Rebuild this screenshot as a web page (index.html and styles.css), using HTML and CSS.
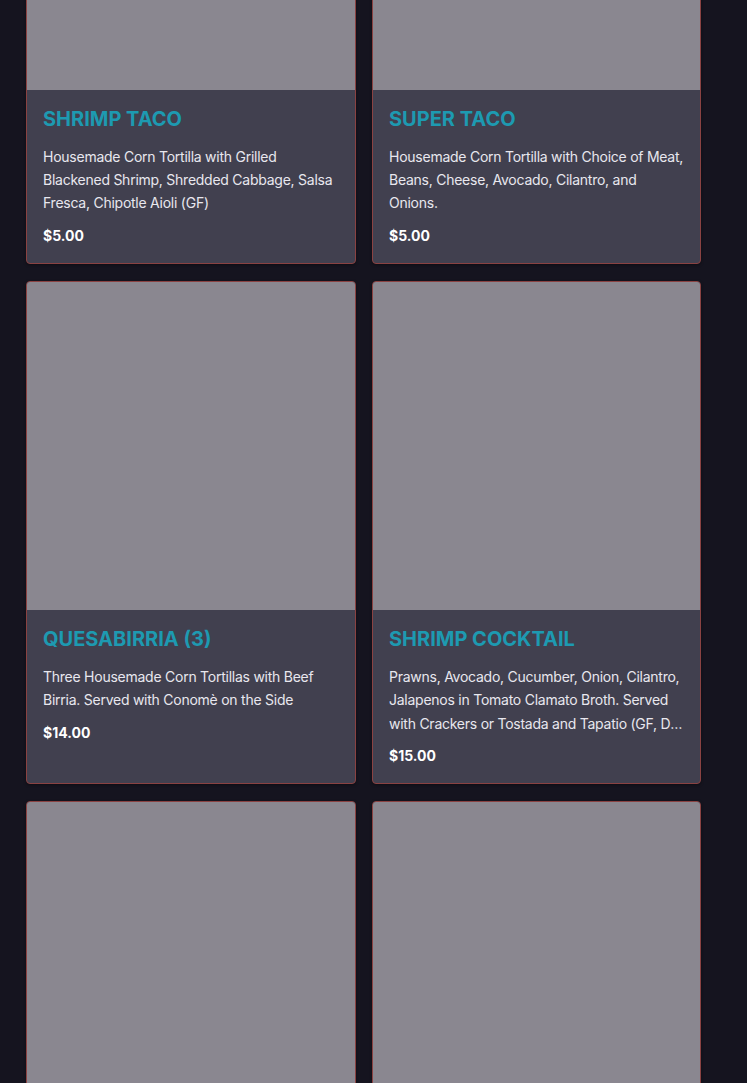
FILE: index.html
```html
<!DOCTYPE html>
<html>
<head>
<meta charset="utf-8">
<link rel="stylesheet" href="styles.css">
</head>
<body>
<div class="grid">
  <div class="card">
    <div class="img"></div>
    <div class="body">
      <h3 class="title">SHRIMP TACO</h3>
      <p class="desc">Housemade Corn Tortilla with Grilled Blackened Shrimp, Shredded Cabbage, Salsa Fresca, Chipotle Aioli (GF)</p>
      <p class="price">$5.00</p>
    </div>
  </div>
  <div class="card">
    <div class="img"></div>
    <div class="body">
      <h3 class="title">SUPER TACO</h3>
      <p class="desc">Housemade Corn Tortilla with Choice of Meat, Beans, Cheese, Avocado, Cilantro, and Onions.</p>
      <p class="price">$5.00</p>
    </div>
  </div>
  <div class="card">
    <div class="img"></div>
    <div class="body">
      <h3 class="title">QUESABIRRIA (3)</h3>
      <p class="desc">Three Housemade Corn Tortillas with Beef Birria. Served with Conomè on the Side</p>
      <p class="price">$14.00</p>
    </div>
  </div>
  <div class="card">
    <div class="img"></div>
    <div class="body">
      <h3 class="title">SHRIMP COCKTAIL</h3>
      <p class="desc">Prawns, Avocado, Cucumber, Onion, Cilantro, Jalapenos in Tomato Clamato Broth. Served with Crackers or Tostada and Tapatio (GF, DF upon request)</p>
      <p class="price">$15.00</p>
    </div>
  </div>
  <div class="card">
    <div class="img"></div>
  </div>
  <div class="card">
    <div class="img"></div>
  </div>
</div>
</body>
</html>
```

FILE: styles.css
```css
html, body {
  margin: 0;
  padding: 0;
  background: #15141f;
  overflow: hidden;
}
body {
  font-family: Inter, "Liberation Sans", sans-serif;
  height: 1083px;
}
.grid {
  display: grid;
  grid-template-columns: 330px 329px;
  column-gap: 16px;
  row-gap: 17px;
  padding-left: 26px;
  margin-top: -239px;
}
.card {
  display: flex;
  flex-direction: column;
  border: 1px solid #8a4242;
  border-radius: 4px;
  overflow: hidden;
  background: #41404f;
  box-shadow: 0 1px 3px rgba(0,0,0,0.4);
}
.img {
  height: 328px;
  background: #8a8790;
}
.body {
  flex: 1;
  padding: 15px 15px 17px 16px;
}
.title {
  margin: 0;
  font-size: 20px;
  line-height: 28px;
  font-weight: 700;
  color: #1d9ab1;
}
.desc {
  margin: 12px 0 0;
  font-size: 14px;
  line-height: 23.2px;
  letter-spacing: -0.25px;
  color: #e8e7ee;
  display: -webkit-box;
  -webkit-line-clamp: 3;
  -webkit-box-orient: vertical;
  overflow: hidden;
}
.price {
  margin: 11.5px 0 0;
  font-size: 14px;
  line-height: 20px;
  font-weight: 700;
  color: #ffffff;
}
```
